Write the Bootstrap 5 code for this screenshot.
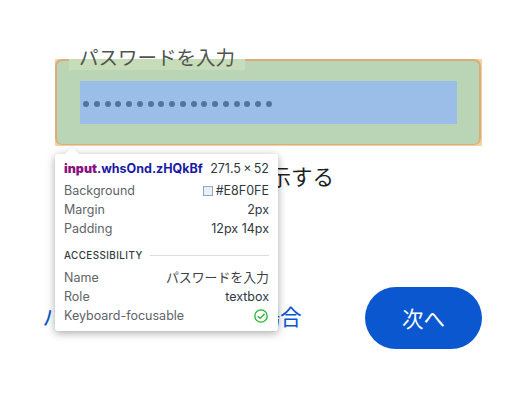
<!DOCTYPE html>
<html lang="ja">
<head>
<meta charset="utf-8">
<title>パスワードを入力</title>
<link href="https://cdn.jsdelivr.net/npm/bootstrap@5.3.0/dist/css/bootstrap.min.css" rel="stylesheet">
<style>
html,body{height:100%;overflow:hidden;background:#fff}
body{font-family:"Inter","Noto Sans CJK JP",sans-serif;color:#1f1f1f}
.pg{width:511px;height:401px;position:relative;padding:59px 29px 0 55px}
.fld{position:relative}
.hl-m{background:#f6cfa3;height:87px;border-radius:1px}
.hl-b{background:#ddab7c;height:86px;padding:1.5px 2px 1.5px 2px;border-radius:7px;margin-right:1px}
.hl-p{background:#bad5b5;height:83px;padding:20.5px 22px 19.5px 23px;border-radius:5px}
.hl-c{background:#9abee8;height:43px;display:flex;align-items:center;padding-left:3px;gap:4.75px}
.dot{width:6px;height:6px;border-radius:50%;background:#4f759f;flex:none;margin-top:3px}
.lbl{position:absolute;left:12px;top:-15px;height:25px;padding:0 9px 0 12px;font-size:19.5px;line-height:25px;color:#4f5651;white-space:nowrap;font-family:"Noto Sans CJK JP",sans-serif}
.lbl-bg{position:absolute;left:14px;top:0;width:176px;height:11px;background:#c7dcb9}
.shw{margin-top:15px;font-size:21.5px;line-height:30px;padding-left:64px;white-space:nowrap;font-family:"Noto Sans CJK JP",sans-serif}
.act{margin-top:96px}
.lnk{color:#0b57d0;font-size:21.6px;text-decoration:none;margin-left:-12.5px;margin-top:-2px;margin-bottom:2px;white-space:nowrap;font-family:"Noto Sans CJK JP",sans-serif}
.nxt{width:117px;height:62px;border-radius:31px;background:#0b57d0;color:#fff;border:0;font-size:21.5px;font-family:"Noto Sans CJK JP",sans-serif;padding:0}
.tip{position:absolute;left:55px;top:154px;width:223px;height:177px;background:#fff;border-radius:3px;box-shadow:0 2px 8px rgba(0,0,0,.35);padding:5px 9px 0;font-size:12.5px;line-height:19px;color:#5f6368}
.arw{position:absolute;left:10px;top:-7px;width:14px;height:14px;background:#fff;transform:rotate(45deg) scale(.72);box-shadow:-1px -1px 2px rgba(0,0,0,.08)}
.sel{font-weight:700;color:#1a1aa6}
.sel b{color:#881280}
.dim{color:#303942}
.cjk{font-size:12.9px;color:#3c4043}
.rw{height:19px}
.gp{margin-top:3px}
.sw{width:10px;height:10px;background:#e8f0fe;border:1px solid #9aa5b8;display:inline-block;margin-right:3px;vertical-align:-1px}
.hd{font-size:9.8px;letter-spacing:.45px;color:#303942;font-weight:500;white-space:nowrap}
.ln{height:1px;background:#dadce0;flex:1;margin-left:7px}
.sec{margin-top:8px;margin-bottom:3px;height:19px}
.ico{margin-top:2px}
</style>
</head>
<body>
<div class="pg">
  <div class="fld">
    <div class="hl-m"><div class="hl-b"><div class="hl-p"><div class="hl-c">
      <span class="dot"></span><span class="dot"></span><span class="dot"></span><span class="dot"></span><span class="dot"></span><span class="dot"></span><span class="dot"></span><span class="dot"></span><span class="dot"></span><span class="dot"></span><span class="dot"></span><span class="dot"></span><span class="dot"></span><span class="dot"></span><span class="dot"></span><span class="dot"></span><span class="dot"></span><span class="dot"></span>
    </div></div></div></div>
    <div class="lbl-bg"></div>
    <div class="lbl">パスワードを入力</div>
  </div>
  <div class="shw">パスワードを表示する</div>
  <div class="act d-flex justify-content-between align-items-center">
    <a class="lnk" href="#">パスワードをお忘れの場合</a>
    <button class="btn nxt" type="button">次へ</button>
  </div>
  <div class="tip">
    <span class="arw"></span>
    <div class="d-flex justify-content-between rw"><span class="sel"><b>input</b>.whsOnd.zHQkBf</span><span class="dim">271.5&#8201;×&#8201;52</span></div>
    <div class="d-flex justify-content-between rw gp"><span>Background</span><span class="dim"><i class="sw"></i>#E8F0FE</span></div>
    <div class="d-flex justify-content-between rw"><span>Margin</span><span class="dim">2px</span></div>
    <div class="d-flex justify-content-between rw"><span>Padding</span><span class="dim">12px 14px</span></div>
    <div class="d-flex align-items-center sec"><span class="hd">ACCESSIBILITY</span><span class="ln"></span></div>
    <div class="d-flex justify-content-between rw"><span>Name</span><span class="cjk">パスワードを入力</span></div>
    <div class="d-flex justify-content-between rw"><span>Role</span><span class="dim">textbox</span></div>
    <div class="d-flex justify-content-between rw"><span>Keyboard-focusable</span>
      <svg width="16" height="16" viewBox="0 0 16 16" class="ico"><circle cx="8" cy="8" r="6.2" fill="none" stroke="#1eb32c" stroke-width="1.3"/><path d="M4.8 8.2l2.3 2.2L11.6 5.8" fill="none" stroke="#1eb32c" stroke-width="1.3"/></svg>
    </div>
  </div>
</div>
</body>
</html>
